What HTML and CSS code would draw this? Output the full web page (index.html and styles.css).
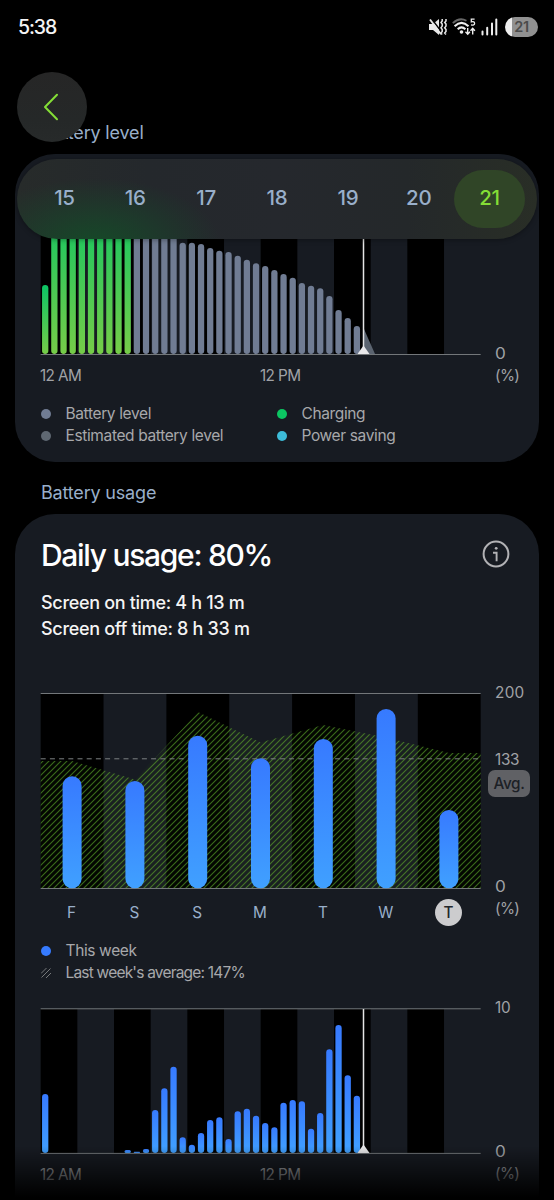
FILE: index.html
```html
<!DOCTYPE html>
<html lang="en">
<head>
<meta charset="utf-8">
<title>Battery</title>
<link rel="stylesheet" href="styles.css">
</head>
<body>
<div class="screen">
  <header class="status">
    <span class="clock">5:38</span>
    <div class="tray">
      <svg class="i-mute" viewBox="0 0 18 18" width="18" height="18">
        <path d="M0 6h4l6-5v16l-6-5H0z" fill="#e8e8e8"/>
        <path d="M1.500 -.5 11.500 12.500" stroke="#000" stroke-width="1.500"/>
        <path d="M1 1.500 12 16.200" stroke="#e8e8e8" stroke-width="1.900"/>
        <path d="M13.200 1v2l-1.200 1.500 1.200 1.600v2L12 9.800l1.200 1.700v2L12 15l1.200 1.400M17 1v2l-1.300 1.500L17 6.100v2l-1.300 1.700 1.300 1.700v2L15.700 15l1.300 1.400" fill="none" stroke="#e8e8e8" stroke-width="1.500"/>
      </svg>
      <svg class="i-wifi" viewBox="0 0 24 18" width="24" height="18">
        <path d="M.8 5.200Q7.500-1.200 14.500 2.800" fill="none" stroke="#666" stroke-width="1.800"/>
        <path d="M2.600 8.200Q9.500 1.500 16.500 8.200M5.700 11.200Q9.500 7.500 13.400 11.200" fill="none" stroke="#eee" stroke-width="2"/>
        <circle cx="9.500" cy="14" r="1.800" fill="#eee"/>
        <path d="M15.700 10v6M13.500 13.800l2.200 2.400 2.200-2.400M20.700 16.500v-6M18.500 12.700l2.200-2.400 2.200 2.400" fill="none" stroke="#eee" stroke-width="1.400"/>
        <path d="M22.600 1.200h-3.300v2.700q3.300-.8 3.300 1.500 0 2.200-3.600 1.500" fill="none" stroke="#eee" stroke-width="1.300"/>
      </svg>
      <svg class="i-signal" viewBox="0 0 17 18" width="17" height="18">
        <path d="M1.500 13.500v3M6.200 9.800v6.700M11 5.500v11M15.300 1.500v15" stroke="#eee" stroke-width="2" stroke-linecap="round"/>
      </svg>
      <span class="battery">21</span>
    </div>
  </header>

  <main class="content">
    <h2 class="section">Battery level</h2>
    <section class="card card-level">
      <div class="chart">
        <svg id="level" class="plot" viewBox="40 154 441 201" width="441" height="201"></svg>
        <div class="axis axis-end"><span class="wide">0</span><span class="unit">(%)</span></div>
        <div class="hours"><span>12 AM</span><span>12 PM</span></div>
      </div>
      <ul class="legend legend-two">
        <li><i class="dot dot-level"></i>Battery level</li>
        <li><i class="dot dot-charging"></i>Charging</li>
        <li><i class="dot dot-estimate"></i>Estimated battery level</li>
        <li><i class="dot dot-saving"></i>Power saving</li>
      </ul>
    </section>

    <h2 class="section section-usage">Battery usage</h2>
    <section class="card card-usage">
      <div class="headline">
        <h1>Daily usage: 80%</h1>
        <svg class="i-info" viewBox="0 0 28 28" width="28" height="28">
          <circle cx="14" cy="14" r="12.400" fill="none" stroke="#b2b2b5" stroke-width="2"/>
          <circle cx="14.200" cy="8.300" r="1.400" fill="#b2b2b5"/>
          <path d="M11 12.700h3.600v8.500" fill="none" stroke="#b2b2b5" stroke-width="1.900"/>
        </svg>
      </div>
      <p class="times"><span class="time-on">Screen on time: 4 h 13 m</span><span>Screen off time: 8 h 33 m</span></p>

      <div class="chart chart-week">
        <svg id="week" class="plot" viewBox="40 692 441 198" width="441" height="198"></svg>
        <div class="axis axis-week"><span class="max">200</span><span class="mean">133</span><b class="avg">Avg.</b><span class="zero wide">0</span><span class="unit">(%)</span></div>
        <div class="days"><span>F</span><span>S</span><span>S</span><span>M</span><span>T</span><span>W</span><span class="today"><b>T</b></span></div>
      </div>
      <ul class="legend legend-week">
        <li><i class="dot dot-week"></i>This week</li>
        <li class="last-week"><svg class="hatch" viewBox="0 0 10 10" width="10" height="10"><path d="M0 5.500 5.500 0M.500 9.500 9.500.500M5 10 10 5" stroke="#77797b" stroke-width="1"/></svg>Last week's average: 147%</li>
      </ul>

      <div class="chart chart-day">
        <svg id="day" class="plot" viewBox="40 1008 441 146" width="441" height="146"></svg>
        <div class="axis axis-day"><span>10</span><span class="low wide">0</span><span class="unit">(%)</span></div>
        <div class="hours"><span>12 AM</span><span>12 PM</span></div>
      </div>
    </section>
  </main>

  <div class="fade"></div>
  <nav class="dates"><span>15</span><span>16</span><span>17</span><span>18</span><span>19</span><span>20</span><span class="selected">21</span></nav>
  <button class="back" aria-label="Back"><svg viewBox="0 0 16 28" width="16" height="28"><path d="M14 1.700 2 14l12 12.200" fill="none" stroke="#84de36" stroke-width="2" stroke-linecap="round" stroke-linejoin="round"/></svg></button>
</div>
<script src="charts.js"></script>
</body>
</html>
```
FILE: styles.css
```css
* { box-sizing: border-box; }
html, body { margin: 0; background: #000; }
body { font-family: Inter, "Liberation Sans", sans-serif; }
h1, h2, p, ul { margin: 0; padding: 0; font-weight: 400; list-style: none; }

.screen { position: relative; width: 554px; height: 1200px; overflow: hidden; background: #000; color: #fff; }

.status { display: flex; justify-content: space-between; align-items: center; height: 53px; padding: 0 16px 0 18px; }
.clock { font-size: 19.5px; line-height: 24px; letter-spacing: -1.1px; font-weight: 500; color: #f4f4f4; }
.tray { display: flex; align-items: center; }
.i-wifi { margin-left: 5px; }
.i-signal { margin-left: 5px; margin-right: 7px; }
.battery { width: 33px; height: 20px; border-radius: 10px; background: linear-gradient(90deg, #eee 7px, #919191 7px); color: #4b4b4b; font-size: 14.5px; line-height: 20px; font-weight: 600; text-align: center; letter-spacing: -.4px; }

.content { padding: 69px 15px 0; }
.section { height: 22px; margin-left: 26px; color: #99afca; font-size: 18px; line-height: 22px; letter-spacing: -.18px; }
.card { background: #171b22; border-radius: 40px; padding: 0 9px 0 25px; }
.card-level { margin-top: 10px; height: 308px; }
.section-usage { margin-top: 20px; }
.card-usage { margin-top: 10px; height: 720px; padding-top: 23px; }

.chart { display: grid; grid-template-columns: 441px 1fr; color: #a0a2a6; font-size: 15.3px; line-height: 22px; letter-spacing: -.6px; }
.plot { display: block; grid-column: 1; grid-row: 1; }
.axis { grid-column: 2; grid-row: 1 / 3; display: flex; flex-direction: column; padding-left: 14px; align-items: flex-start; letter-spacing: -.3px; }
.axis-end { justify-content: flex-end; }
.wide { transform: scaleX(1.12); transform-origin: left; }
.unit { letter-spacing: -.7px; }
.max { letter-spacing: .3px; }
.hours { grid-column: 1; grid-row: 2; display: flex; height: 32px; padding-top: 10px; }
.hours span { width: 220px; }
.legend { color: #a7a8ab; font-size: 15.5px; line-height: 22px; letter-spacing: -.37px; }
.legend li { display: flex; align-items: center; }
.legend-two { display: grid; grid-template-columns: 236px 1fr; margin-top: 16px; padding-left: 1px; }
.dot { width: 10px; height: 10px; border-radius: 50%; margin: 0 14.500px 0 0; }
.dot-level { background: #707c93; }
.dot-estimate { background: #5f6872; }
.dot-charging { background: #0cc662; }
.dot-saving { background: #3dbcd9; }
.dot-week { background: #367bff; }
.hatch { margin-right: 14.500px; }

.headline { display: flex; justify-content: space-between; align-items: center; height: 36px; padding: 0 20px 0 1px; }
.headline h1 { font-size: 30px; line-height: 36px; letter-spacing: -1.3px; font-weight: 500; }
.i-info { margin-top: -2px; }
.times { display: flex; flex-direction: column; padding: 17px 0 0 1px; font-size: 18px; line-height: 26px; letter-spacing: -.32px; font-weight: 500; color: #f4f4f4; }
.chart-week { margin-top: 50px; }
.axis-week { margin-top: -10px; }
.mean { margin-top: 45px; }
.avg { width: 42px; height: 27px; margin-left: -7px; border-radius: 7px; background: #606165; color: #1c2026; font-weight: 500; line-height: 27px; text-align: center; }
.mean + .avg { margin-top: -1px; }
.zero { margin-top: 79px; }
.days { grid-column: 1; grid-row: 2; display: flex; height: 46px; padding: 9px 0 0; color: #99afca; letter-spacing: 0; }
.days span { width: 62.860px; height: 27px; line-height: 27px; text-align: center; }
.days .today { display: flex; justify-content: center; }
.today b { width: 27px; height: 27px; border-radius: 50%; background: #ccccce; color: #22262b; font-weight: 500; }
.legend-week { margin-top: 4px; padding-left: 1px; }
.last-week { letter-spacing: -.8px; }
.chart-day { margin-top: 24px; }
.axis-day { margin-top: -11px; }
.low { margin-top: 122px; }

.fade { position: absolute; left: 0; right: 0; bottom: 0; height: 54px; background: linear-gradient(rgba(0,0,0,0), rgba(0,0,0,.5) 50%, #000 95%); }
.dates { position: absolute; left: 17px; top: 159px; width: 520px; height: 80px; padding: 11px 12px; border-radius: 40px; display: grid; grid-template-columns: repeat(7, 1fr); text-align: center; color: #99afca; font-size: 20.5px; line-height: 55px; font-weight: 500; letter-spacing: -.3px; background: radial-gradient(ellipse 125px 65px at 78px 84px, rgba(21,74,40,.95), rgba(24,70,42,.6) 45%, rgba(30,50,40,0)), linear-gradient(90deg, #272b2a, #24282c 25%, #25282d 50%, #24282a 75%, #292e26); box-shadow: 0 1px 5px rgba(0,0,0,.35); }
.selected { height: 58px; border-radius: 29px; background: #304527; color: #84de36; }
.back { position: absolute; left: 17px; top: 72px; width: 70px; height: 70px; border: 0; padding: 0 3px 0 0; border-radius: 50%; background: linear-gradient(#262626, #252828 70%, #272a2a); display: flex; align-items: center; justify-content: center; }
```
FILE: charts.js
```javascript
const LEFT = 40.67, WIDTH = 440;

function bands(count, top, bottom) {
  const w = WIDTH / count;
  let s = '';
  for (let i = 0; i < count; i += 2) {
    s += `<rect x="${LEFT + i * w}" y="${top}" width="${w}" height="${bottom - top}" fill="#000"/>`;
  }
  return s;
}

function bar(center, width, top, bottom, fill) {
  const h = bottom - top;
  return `<rect x="${center - width / 2}" y="${top}" width="${width}" height="${h}" rx="${Math.min(width / 2, h / 2)}" fill="${fill}"/>`;
}

function gradient(id, from, to) {
  return `<linearGradient id="${id}" x1="0" y1="0" x2="0" y2="1"><stop stop-color="${from}"/><stop offset="1" stop-color="${to}"/></linearGradient>`;
}

function rule(y) {
  return `<path d="M${LEFT} ${y}H${LEFT + WIDTH}" stroke="#73777a"/>`;
}

function marker(top, base) {
  return `<path d="M363.500 ${top}V${base}" stroke="#e4e4e4" stroke-width="1.500"/><path d="M363.500 ${base - 8.5}l6 8.500h-12z" fill="#e8e8ea"/>`;
}

const halfHour = i => 45.2 + i * 9.167;

const level = [285, ...Array(9).fill(200), ...Array(5).fill(230), 242.7, 242.7, 244, 248, 250.7, 252,
  255.7, 259.7, 263.3, 266, 270, 274, 277.7, 283, 285.7, 288.3, 296, 310, 318, 326];
document.getElementById('level').innerHTML =
  `<defs>${gradient('charge', '#0cc464', '#76cc48')}</defs>` + bands(12, 170, 354) +
  '<path d="M364 329l11 25h-11z" fill="#5b6470"/>' +
  level.map((y, i) => bar(halfHour(i), 6.3, y, 354, i < 10 ? 'url(#charge)' : '#707c93')).join('') +
  rule(354.5) + marker(200, 354);

const AREA = 'M40.700 761H72L135 779.500 198 712 260.500 742.500 323 725 386 737.500 449 753H480.700V888.500H40.700z';
const week = [776.3, 781, 735.7, 758.2, 739, 709, 810];
document.getElementById('week').innerHTML =
  `<defs>${gradient('use', '#377aff', '#40a0ff')}
   <pattern id="stripes" width="6" height="6" patternUnits="userSpaceOnUse"><path d="M-1 7 7-1M-1 1 1-1M5 7 7 5" stroke="#5fae2c" stroke-opacity=".6" stroke-width="1.100"/></pattern></defs>` +
  bands(7, 693.5, 888.5) +
  `<path d="${AREA}" fill="#63b729" fill-opacity=".03"/><path d="${AREA}" fill="url(#stripes)"/>
   <path d="M40.700 758.800H480.700" stroke="#7d8082" stroke-dasharray="5 4.200"/>` + rule(693.5) + rule(888.5) +
  week.map((y, i) => bar(72.1 + i * 62.8, 19, y, 888.3, 'url(#use)')).join('');

const day = [1094, 0, 0, 0, 0, 0, 0, 0, 0, 1150, 1151.7, 1149, 1110, 1088.3, 1066.7, 1137.3, 1144.7, 1133, 1120,
  1117.3, 1139, 1111.3, 1108.7, 1115.7, 1123, 1127.3, 1102.7, 1100, 1101.3, 1128.7, 1113, 1049.3, 1025, 1075.3, 1095.7];
document.getElementById('day').innerHTML =
  bands(12, 1009, 1153) + rule(1008.8) +
  day.map((y, i) => y ? bar(halfHour(i), 6.3, y, 1153, 'url(#use)') : '').join('') +
  rule(1153.4) + marker(1009, 1153);
```
